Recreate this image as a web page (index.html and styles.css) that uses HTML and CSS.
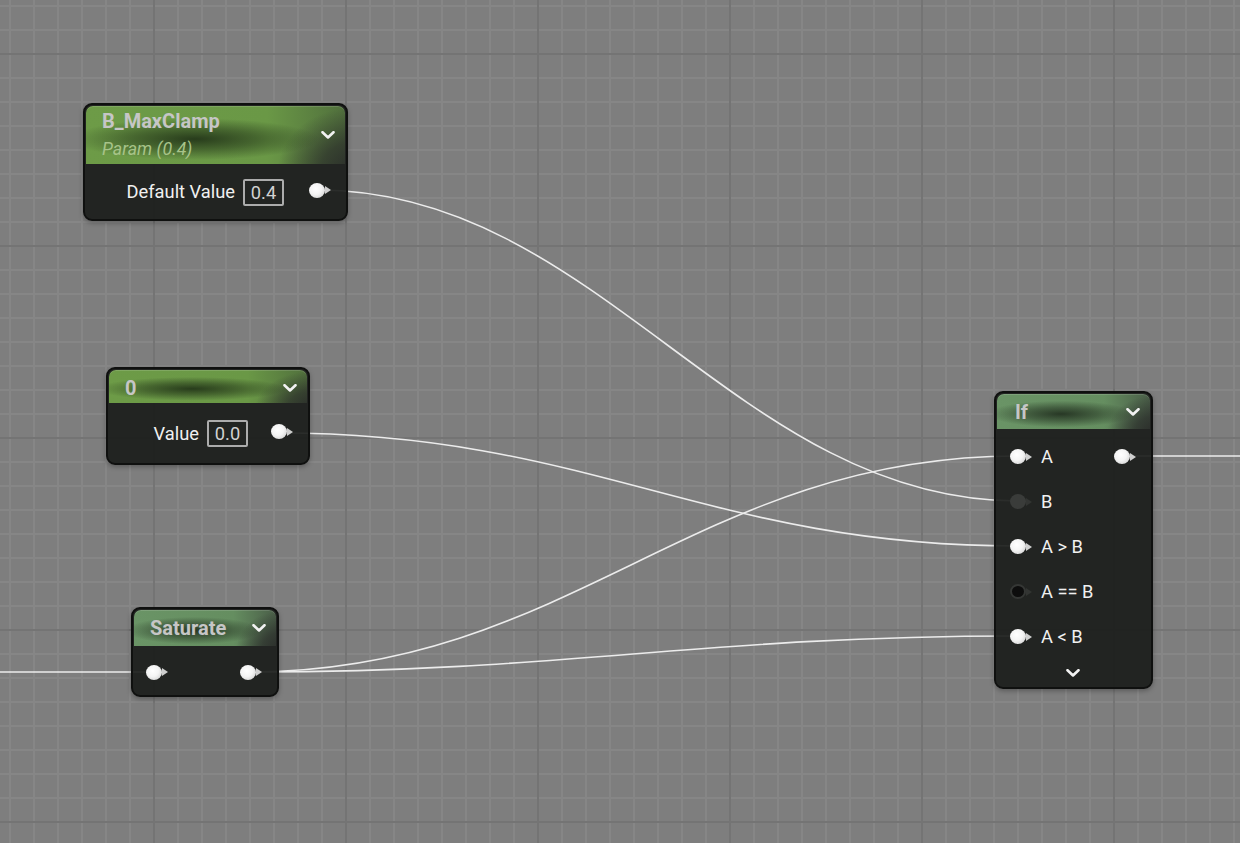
FILE: index.html
```html
<!DOCTYPE html>
<html lang="en">
<head>
<meta charset="utf-8">
<title>Material Graph</title>
<link rel="stylesheet" href="styles.css">
</head>
<body>
<div class="graph">
  <svg class="wires" width="1240" height="843" viewBox="0 0 1240 843">
    <path d="M318 190 C598 190 738 501 1018 501"/>
    <path d="M279 433 C590 433 708 546 1018 546"/>
    <path d="M248 672 C572 672 694 456 1018 456"/>
    <path d="M248 672 C572 672 694 636 1018 636"/>
    <path d="M0 672 H156"/>
    <path d="M1123 456 H1240"/>
  </svg>

  <div class="node n-maxclamp">
    <div class="hdr hdr-param">
      <div class="titles">
        <div class="title">B_MaxClamp</div>
        <div class="subtitle">Param (0.4)</div>
      </div>
      <svg class="chev" width="14" height="8" viewBox="0 0 14 8"><polyline points="1.5,1.2 7,6.5 12.5,1.2"/></svg>
    </div>
    <div class="body body-out">
      <span class="label">Default Value</span>
      <span class="valbox">0.4</span>
      <span class="pin out"><i class="dot"></i><i class="arrow"></i></span>
    </div>
  </div>

  <div class="node n-zero">
    <div class="hdr hdr-param">
      <div class="title">0</div>
      <svg class="chev" width="14" height="8" viewBox="0 0 14 8"><polyline points="1.5,1.2 7,6.5 12.5,1.2"/></svg>
    </div>
    <div class="body body-out">
      <span class="label">Value</span>
      <span class="valbox">0.0</span>
      <span class="pin out"><i class="dot"></i><i class="arrow"></i></span>
    </div>
  </div>

  <div class="node n-saturate">
    <div class="hdr hdr-func">
      <div class="title">Saturate</div>
      <svg class="chev" width="14" height="8" viewBox="0 0 14 8"><polyline points="1.5,1.2 7,6.5 12.5,1.2"/></svg>
    </div>
    <div class="body body-sat">
      <span class="pin"><i class="dot"></i><i class="arrow"></i></span>
      <span class="pin"><i class="dot"></i><i class="arrow"></i></span>
    </div>
  </div>

  <div class="node n-if">
    <div class="hdr hdr-func">
      <div class="title">If</div>
      <svg class="chev" width="14" height="8" viewBox="0 0 14 8"><polyline points="1.5,1.2 7,6.5 12.5,1.2"/></svg>
    </div>
    <div class="body body-if">
      <div class="if-row">
        <span class="pin"><i class="dot"></i><i class="arrow"></i></span>
        <span class="label">A</span>
        <span class="pin out-right"><i class="dot"></i><i class="arrow"></i></span>
      </div>
      <div class="if-row">
        <span class="pin dim"><i class="dot"></i><i class="arrow"></i></span>
        <span class="label">B</span>
      </div>
      <div class="if-row">
        <span class="pin"><i class="dot"></i><i class="arrow"></i></span>
        <span class="label">A &gt; B</span>
      </div>
      <div class="if-row">
        <span class="pin hollow"><i class="dot"></i><i class="arrow"></i></span>
        <span class="label">A == B</span>
      </div>
      <div class="if-row">
        <span class="pin"><i class="dot"></i><i class="arrow"></i></span>
        <span class="label">A &lt; B</span>
      </div>
      <div class="if-more">
        <svg class="chev" width="14" height="8" viewBox="0 0 14 8"><polyline points="1.5,1.2 7,6.5 12.5,1.2"/></svg>
      </div>
    </div>
  </div>
</div>
</body>
</html>
```

FILE: styles.css
```css
* { box-sizing: border-box; }

html, body {
  margin: 0;
  padding: 0;
  width: 1240px;
  height: 843px;
  overflow: hidden;
}

body {
  font-family: Roboto, "Liberation Sans", sans-serif;
  background-color: #7e7e7e;
  background-image:
    linear-gradient(to right, #747474 2px, transparent 2px),
    linear-gradient(to bottom, #747474 2px, transparent 2px),
    linear-gradient(to right, #868686 2px, transparent 2px),
    linear-gradient(to bottom, #868686 2px, transparent 2px);
  background-size: 192px 192px, 192px 192px, 24px 24px, 24px 24px;
  background-position: 153px 0, 0 53px, 9px 0, 0 5px;
}

.graph {
  position: relative;
  width: 1240px;
  height: 843px;
}

.wires {
  position: absolute;
  left: 0;
  top: 0;
  z-index: 0;
}
.wires path {
  fill: none;
  stroke: #ececec;
  stroke-width: 1.6;
}

/* ---------- nodes ---------- */
.node {
  position: absolute;
  z-index: 1;
  display: flex;
  flex-direction: column;
  border: 2px solid #0f100f;
  border-radius: 9px;
  padding: 0 1px 1px 1px;
  background: rgba(26, 28, 26, 0.92);
  box-shadow: 0 2px 5px rgba(0, 0, 0, 0.28);
}

.n-maxclamp { left: 83px;  top: 103px; width: 265px; height: 118px; }
.n-zero     { left: 106px; top: 367px; width: 204px; height: 98px; }
.n-saturate { left: 131px; top: 607px; width: 148px; height: 90px; }
.n-if       { left: 994px; top: 391px; width: 159px; height: 298px; }

.hdr {
  display: flex;
  align-items: center;
  justify-content: space-between;
  padding: 0 10px 0 16px;
  border-radius: 7px 7px 0 0;
  box-shadow: inset 0 1px 0 rgba(255, 255, 255, 0.14);
  flex: none;
}
.n-maxclamp .hdr { height: 58px; margin-top: 1px; }
.n-zero .hdr     { height: 33px; margin-top: 1px; padding-top: 2px; }
.n-saturate .hdr { height: 36px; margin-top: 1px; padding-bottom: 1px; }
.n-if .hdr       { height: 35px; margin-top: 1px; padding-left: 18px; }

.hdr-param {
  background:
    radial-gradient(ellipse 48% 36% at 42% 57%, rgba(34, 52, 24, 0.92) 0%, rgba(34, 52, 24, 0.5) 50%, rgba(34, 52, 24, 0) 100%),
    radial-gradient(ellipse 30% 110% at 104% 112%, rgba(42, 44, 42, 1) 0%, rgba(42, 44, 42, 0.7) 45%, rgba(42, 44, 42, 0) 100%),
    linear-gradient(to right, #6d9b47 0%, #6a9846 70%, #51703d 100%);
}
.hdr-func {
  background:
    radial-gradient(ellipse 48% 38% at 42% 57%, rgba(34, 48, 32, 0.92) 0%, rgba(34, 48, 32, 0.5) 50%, rgba(34, 48, 32, 0) 100%),
    radial-gradient(ellipse 32% 110% at 104% 112%, rgba(42, 44, 42, 1) 0%, rgba(42, 44, 42, 0.7) 45%, rgba(42, 44, 42, 0) 100%),
    linear-gradient(to right, #6a9466 0%, #658e60 70%, #4a5e48 100%);
}

.titles {
  display: flex;
  flex-direction: column;
  padding-top: 0;
}
.title {
  font-weight: 700;
  font-size: 20px;
  line-height: 22px;
  color: #c6c6c6;
}
.subtitle {
  font-style: italic;
  font-size: 17.8px;
  line-height: 22px;
  margin-top: 6px;
  color: #a7c389;
}

.chev {
  display: block;
  flex: none;
}
.chev polyline {
  fill: none;
  stroke: #f2f2f2;
  stroke-width: 2.6;
  stroke-linecap: round;
  stroke-linejoin: round;
}

.body {
  flex: 1;
  border-radius: 0 0 7px 7px;
}

.label {
  font-size: 18.3px;
  line-height: 22px;
  color: #f0f0f0;
  white-space: nowrap;
}

.body-out {
  display: flex;
  align-items: center;
  justify-content: flex-end;
  padding: 2px 14px 0 0;
}
.valbox {
  margin-left: 8px;
  width: 41px;
  height: 27px;
  border: 2px solid #acacac;
  border-radius: 2px;
  display: flex;
  align-items: center;
  justify-content: center;
  font-size: 18.3px;
  color: #d2d2d2;
}
.n-maxclamp .valbox { margin-right: 25px; }
.n-zero .valbox { margin-right: 23px; }

/* ---------- pins ---------- */
.pin {
  display: inline-flex;
  align-items: center;
  flex: none;
}
.pin .dot {
  display: block;
  width: 16px;
  height: 15px;
  border-radius: 50%;
  background: radial-gradient(circle at 42% 38%, #ffffff 0%, #f4f4f4 45%, #d2d2d2 85%, #bdbdbd 100%);
}
.pin .arrow {
  display: block;
  width: 0;
  height: 0;
  border-top: 4px solid transparent;
  border-bottom: 4px solid transparent;
  border-left: 6px solid #cfcfcf;
}
.body-out .pin { margin-bottom: 4px; }

.pin.dim .dot { background: #3a3c3a; }
.pin.dim .arrow { border-left-color: #333533; }
.pin.hollow .dot {
  background: #0d0d0d;
  border: 2px solid #353735;
}
.pin.hollow .arrow { border-left-color: #333533; }

.body-sat {
  display: flex;
  align-items: center;
  justify-content: space-between;
  padding: 4px 14px 0 12px;
}

.body-if {
  display: flex;
  flex-direction: column;
  padding: 5px 0 0 13px;
}
.if-row {
  height: 45px;
  display: flex;
  align-items: center;
}
.if-row .label { margin-left: 9px; }
.if-row .out-right { margin-left: auto; margin-right: 14px; }
.if-more {
  display: flex;
  justify-content: center;
  padding: 10px 14px 0 0;
}
```
